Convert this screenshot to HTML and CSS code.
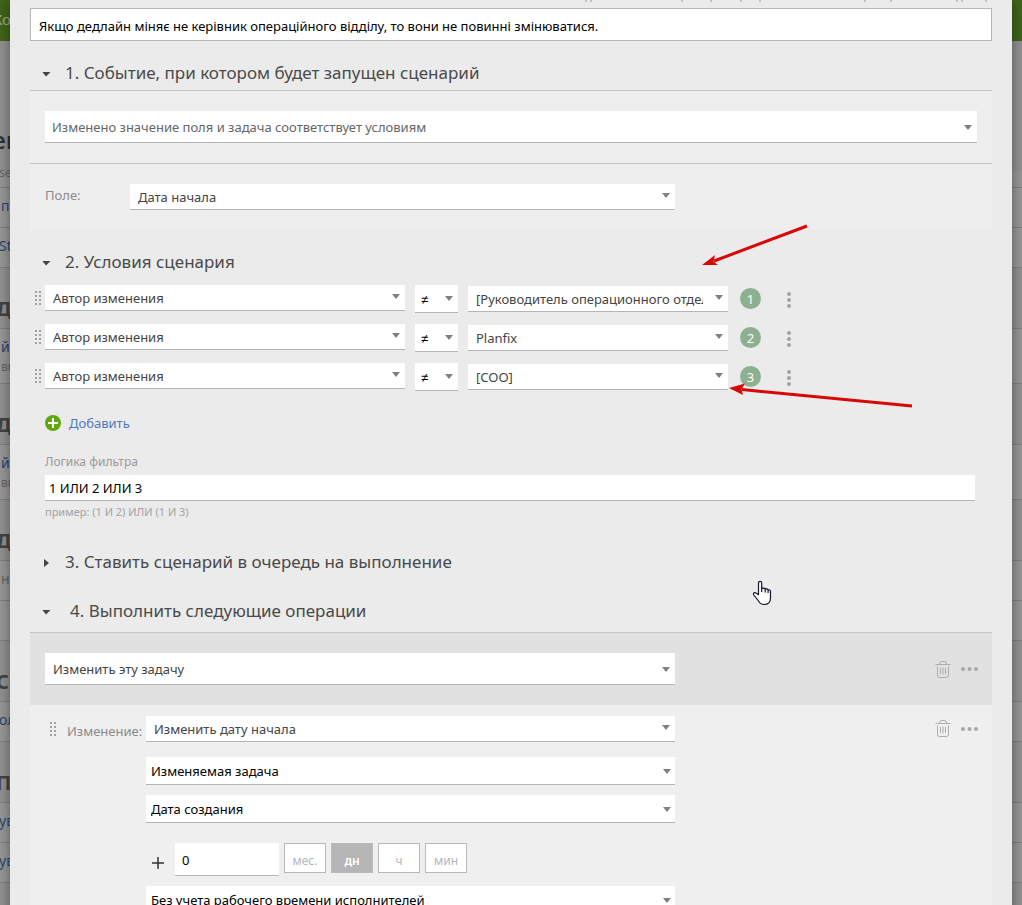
FILE: index.html
```html
<!DOCTYPE html>
<html lang="ru">
<head>
<meta charset="utf-8">
<title>Сценарий</title>
<link rel="stylesheet" href="styles.css">
</head>
<body>
<div class="page" aria-hidden="true">
  <div class="topbar">Ко</div>
  <div class="page-title">ен</div>
  <div class="line sub">se</div>
  <div class="line link in">п</div>
  <div class="line link">Sti</div>
  <div class="group">Д</div>
  <div class="line tall link in">й<span class="note">вн</span></div>
  <div class="group">Д</div>
  <div class="line tall link in">й<span class="note">вн</span></div>
  <div class="group">Д</div>
  <div class="line in">н</div>
  <div class="line"></div>
  <div class="group">С</div>
  <div class="line link">ол</div>
  <div class="group">П</div>
  <div class="line link">ув</div>
  <div class="line link">ув</div>
  <div class="group"></div>
</div>

<main class="modal">
  <svg class="clipped" width="408" height="2" aria-hidden="true"><path d="M2 0v2M7 0v2M98 0v2M127 0v2M157 0v2M176 0v2M281 0v2M307 0v2M373 0v2M378 0v2M402 0v2" stroke="#999" stroke-width="1"/></svg>
  <input class="field desc" aria-label="Описание" value="Якщо дедлайн міняє не керівник операційного відділу, то вони не повинні змінюватися.">

  <h2 class="head"><span class="tri"></span>1. Событие, при котором будет запущен сценарий</h2>
  <section class="panel">
    <div class="panel-row">
      <select class="field pick big event" aria-label="Событие"><option>Изменено значение поля и задача соответствует условиям</option></select>
    </div>
    <div class="panel-row param">
      <label for="fld">Поле:</label>
      <select class="field pick" id="fld"><option>Дата начала</option></select>
    </div>
  </section>

  <h2 class="head second"><span class="tri"></span>2. Условия сценария</h2>
  <div class="conds">
    <div class="cond">
      <span class="grip"></span>
      <select class="field pick subject" aria-label="Параметр 1"><option>Автор изменения</option></select>
      <select class="field pick op" aria-label="Сравнение 1"><option>≠</option></select>
      <select class="field pick value" aria-label="Значение 1"><option>[Руководитель операционного отдела]</option></select>
      <span class="num">1</span>
      <button class="more" aria-label="Ещё"><svg width="4" height="16" fill="#a3a3a3"><circle cx="2" cy="2" r="2"/><circle cx="2" cy="8" r="2"/><circle cx="2" cy="14" r="2"/></svg></button>
    </div>
    <div class="cond">
      <span class="grip"></span>
      <select class="field pick subject" aria-label="Параметр 2"><option>Автор изменения</option></select>
      <select class="field pick op" aria-label="Сравнение 2"><option>≠</option></select>
      <select class="field pick value" aria-label="Значение 2"><option>Planfix</option></select>
      <span class="num">2</span>
      <button class="more" aria-label="Ещё"><svg width="4" height="16" fill="#a3a3a3"><circle cx="2" cy="2" r="2"/><circle cx="2" cy="8" r="2"/><circle cx="2" cy="14" r="2"/></svg></button>
    </div>
    <div class="cond">
      <span class="grip"></span>
      <select class="field pick subject" aria-label="Параметр 3"><option>Автор изменения</option></select>
      <select class="field pick op" aria-label="Сравнение 3"><option>≠</option></select>
      <select class="field pick value" aria-label="Значение 3"><option>[COO]</option></select>
      <span class="num">3</span>
      <button class="more" aria-label="Ещё"><svg width="4" height="16" fill="#a3a3a3"><circle cx="2" cy="2" r="2"/><circle cx="2" cy="8" r="2"/><circle cx="2" cy="14" r="2"/></svg></button>
    </div>
  </div>
  <div class="filter">
    <a class="add" href="#"><svg width="16" height="16"><circle cx="8" cy="8" r="8" fill="#5ea80b"/><path d="M8 3v10M3 8h10" stroke="#fff" stroke-width="2"/></svg>Добавить</a>
    <label class="caption" for="logic">Логика фильтра</label>
    <input class="field logic" id="logic" value="1 ИЛИ 2 ИЛИ 3">
    <p class="hint">пример: (1 И 2) ИЛИ (1 И 3)</p>
  </div>

  <h2 class="head third"><span class="tri shut"></span>3. Ставить сценарий в очередь на выполнение</h2>
  <h2 class="head fourth"><span class="tri"></span>4. Выполнить следующие операции</h2>
  <section class="panel">
    <div class="oper">
      <select class="field pick big wide" aria-label="Операция"><option>Изменить эту задачу</option></select>
      <span class="tools">
        <button aria-label="Удалить"><svg width="16" height="17" fill="none" stroke="#adadad"><path d="M.5 3.5h15M4.500 3q0-2.500 2.500-2.500h2q2.500 0 2.500 2.500M2.500 5.500v9q0 2 2 2h7q2 0 2-2v-9M5.500 7v6M8 6.500v7M10.500 7v6"/></svg></button>
        <button aria-label="Ещё"><svg width="17" height="4" fill="#a8a8a8"><circle cx="2" cy="2" r="2"/><circle cx="8.500" cy="2" r="2"/><circle cx="15" cy="2" r="2"/></svg></button>
      </span>
    </div>
    <div class="change">
      <span class="grip"></span>
      <label for="chg">Изменение:</label>
      <div class="stack">
        <select class="field pick" id="chg"><option>Изменить дату начала</option></select>
        <select class="field pick mid" aria-label="Задача"><option>Изменяемая задача</option></select>
        <select class="field pick mid" aria-label="Дата"><option>Дата создания</option></select>
        <div class="shift">
          <svg class="plus" width="12" height="12" aria-hidden="true"><path d="M6 0v12M0 6h12" stroke="#333" stroke-width="1.500"/></svg>
          <input class="field amount" aria-label="Количество" value="0">
          <button class="unit">мес.</button>
          <button class="unit on">дн</button>
          <button class="unit">ч</button>
          <button class="unit">мин</button>
        </div>
        <select class="field pick mid" aria-label="Учет времени"><option>Без учета рабочего времени исполнителей</option></select>
      </div>
      <span class="tools">
        <button aria-label="Удалить"><svg width="16" height="17" fill="none" stroke="#adadad"><path d="M.5 3.500h15M4.500 3q0-2.500 2.500-2.500h2q2.500 0 2.500 2.500M2.500 5.500v9q0 2 2 2h7q2 0 2-2v-9M5.500 7v6M8 6.500v7M10.500 7v6"/></svg></button>
        <button aria-label="Ещё"><svg width="17" height="4" fill="#a8a8a8"><circle cx="2" cy="2" r="2"/><circle cx="8.500" cy="2" r="2"/><circle cx="15" cy="2" r="2"/></svg></button>
      </span>
    </div>
  </section>
</main>

<svg class="marks" width="1022" height="905" aria-hidden="true">
  <g stroke="#d90808" stroke-width="3" fill="#d90808">
    <path d="M807 226 714 261M912 406 742 389.500"/>
    <path stroke="none" d="M702 265 715 255 713.500 261.500 718 265ZM729 388 745 383.500 741.500 389.500 743 395Z"/>
  </g>
  <path d="M758.500 595v-12q0-1.700 1.600-1.700t1.600 1.700v5.500q3-.8 3.500 .5 2.300-.5 2.900 .8 2.400-.3 2.400 2v6.200q0 6.500-6.500 6.500-3.500 0-5.500-3.500l-4.700-6q-.9-1.800 .8-2.300 1.500-.3 3.900 2.300" fill="#fff" stroke="#15152b" stroke-width="1.200"/>
  <path d="M761.700 587v5M765.200 588.500v4M768.100 590v3" stroke="#15152b" stroke-width="1.200"/>
</svg>
</body>
</html>
```
FILE: styles.css
```css
* { box-sizing: border-box; }
body {
  margin: 0;
  height: 100vh;
  position: relative;
  overflow: hidden;
  background: #949494;
  color: #444;
  font: 13px/18px "Noto Sans", "Open Sans", sans-serif;
}
button { border: 0; background: none; padding: 0; font: inherit; display: flex; }

/* dimmed page behind the dialog */
.topbar { height: 41px; padding-top: 10px; background: #41661b; color: #9db084; font-size: 15px; text-indent: -7px; }
.page-title { height: 130px; padding-top: 87px; font-size: 24px; line-height: 24px; font-weight: 600; color: #333; text-indent: -8px; }
.line { height: 40px; padding-top: 9px; border-bottom: 1px solid #838383; background: #9a9a9a; color: #666; font-size: 14px; text-indent: -1px; }
.line.in { text-indent: 1px; }
.line.sub { height: 17px; padding: 0; line-height: 3px; font-size: 12px; }
.line.link { color: #2c4470; }
.line.tall { height: 55px; }
.note { display: block; padding-top: 2px; color: #666; font-size: 12px; }
.group { height: 61px; padding-top: 29px; border-bottom: 1px solid #838383; font-size: 20px; line-height: 24px; font-weight: 700; color: #444; text-indent: -4px; }

/* dialog */
.modal {
  position: absolute;
  inset: 0 10px auto;
  min-height: 100%;
  padding: 0 20px;
  background: #ebebeb;
  box-shadow: 0 0 14px rgba(0, 0, 0, .45);
}
.clipped { display: block; margin: 0 0 6px auto; }
.field {
  display: block;
  height: 26px;
  margin: 0;
  border: 0;
  border-bottom: 1px solid #b5b5b5;
  border-radius: 0;
  background: #fff;
  color: #444;
  font: inherit;
}
.pick {
  appearance: none;
  padding: 1px 25px 0 8px;
  background: #fff url("data:image/svg+xml,%3Csvg xmlns='http://www.w3.org/2000/svg' width='8' height='5'%3E%3Cpath d='M0 0h8L4 5z' fill='%23808080'/%3E%3C/svg%3E") right 5px top 9px no-repeat;
}
.big { height: 32px; background-position: right 5px top 14px; }
.mid { height: 28px; padding: 1px 25px 0 5px; color: #000; background-position: right 4px top 12px; }
.desc { width: 100%; height: 33px; padding: 2px 8px 0; border: 1px solid #b5b5b5; color: #000; }

.head {
  display: flex;
  align-items: center;
  height: 24px;
  margin: 20px 0 5px;
  padding-left: 12px;
  font-size: 17px;
  line-height: 24px;
  font-weight: 400;
  color: #4a4a4a;
}
.tri { width: 23px; height: 5px; margin-top: 2px; background: #444; clip-path: polygon(0 0, 9px 0, 4px 5px); }
.tri.shut { height: 8px; clip-path: polygon(2px 0, 7px 4px, 2px 8px); }
.second { margin-top: 20px; }
.third { margin-top: 29px; margin-bottom: 0; }
.fourth { margin-top: 25px; margin-bottom: 9px; }
.fourth .tri { width: 28px; }

.panel { border-top: 1px solid #c4c4c4; background: #eee; }
.panel-row { padding: 20px 15px; }
.panel-row + .panel-row { border-top: 1px solid #c4c4c4; }
.event { width: 100%; padding-left: 7px; color: #666; }
.param { display: flex; gap: 10px; color: #8a8a8a; }
.param label { width: 75px; padding-top: 2px; }
.param .pick { width: 545px; }

.conds { display: grid; gap: 11px; padding: 6px 0 0 5px; }
.cond { display: flex; align-items: flex-start; height: 28px; }
.grip {
  flex: none;
  width: 7px;
  height: 15px;
  margin: 6px 3px 0 0;
  background: conic-gradient(from 0deg at 2px 2px, transparent 75%, #a0a0a0 0) 0 0 / 4px 4px;
}
.subject { width: 360px; }
.op { width: 43px; height: 28px; margin: 0 10px; padding: 2px 0 0 6px; color: #000; font-family: "Liberation Sans", sans-serif; background-position: right 5px top 11px; }
.value { width: 260px; margin-top: 1px; }
.num {
  width: 21px;
  height: 21px;
  margin: 3px 26px 0 12px;
  border-radius: 50%;
  background: #8db091;
  color: #fff;
  line-height: 22px;
  text-align: center;
}
.more { margin-top: 7px; }

.filter { padding: 23px 17px 0 15px; }
.add { display: flex; align-items: center; gap: 8px; color: #4f79bd; text-decoration: none; }
.caption { display: block; margin: 21px 0 4px; font-size: 12px; color: #999; }
.logic { width: 100%; padding: 1px 4px 0; color: #000; }
.hint { margin: 2px 0 0; font-size: 11px; color: #a3a3a3; }

.oper { display: flex; justify-content: space-between; align-items: center; padding: 20px 14px 20px 15px; background: #e1e1e1; }
.wide { width: 630px; }
.tools { display: flex; align-items: center; gap: 10px; margin-left: auto; }
.change { display: flex; align-items: flex-start; padding: 11px 14px 20px 20px; background: #efefef; }
.change > label { width: 86px; padding: 6px 0 0 7px; color: #8a8a8a; }
.change .tools { padding-top: 4px; }
.change .stack { width: 529px; }
.stack .pick { width: 100%; }
.stack .mid { margin-top: 10px; }
.stack #chg { margin-bottom: 15px; }
.shift { display: flex; gap: 5px; margin-top: 20px; padding-left: 6px; }
.plus { margin: 14px 6px 0 0; }
.amount { width: 104px; height: 33px; padding: 2px 7px 0; color: #000; }
.unit { width: 42px; height: 30px; padding-top: 5px; border: 1px solid #b8b8b8; background: #fff; color: #b5b5b5; font-size: 12px; justify-content: center; align-items: center; }
.unit.on { background: #b5b5b5; color: #fff; font-weight: 600; }

/* pointer and arrows lie over the dialog */
.marks { position: absolute; top: 0; left: 0; pointer-events: none; }
```
